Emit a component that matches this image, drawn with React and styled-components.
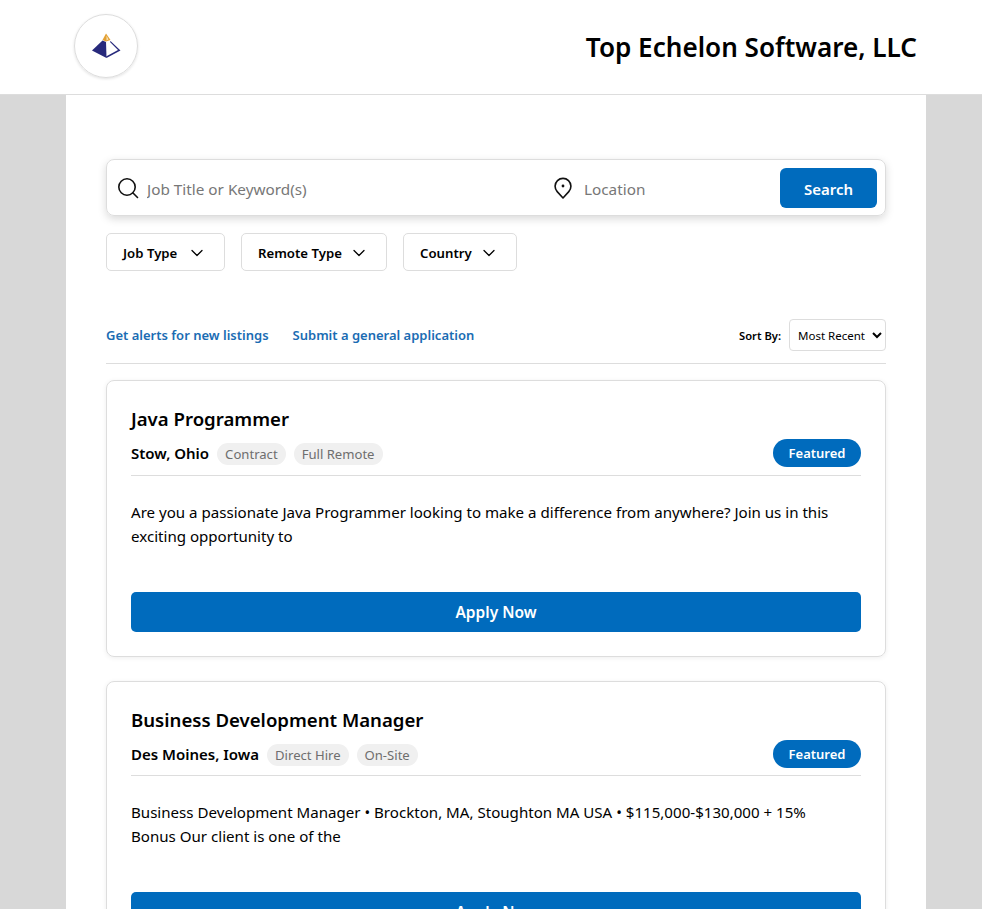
import React from "react"
import styled, { createGlobalStyle } from "styled-components"
import { ChevronDown } from "lucide-react"

const Global = createGlobalStyle`
  html, body {
    margin: 0;
    padding: 0;
    height: 909px;
    overflow: hidden;
    background: #d8d8d8;
    font-family: "Noto Sans", "Open Sans", sans-serif;
    color: #000;
  }
`

const jobs = [
  {
    title: "Java Programmer",
    place: "Stow, Ohio",
    tags: ["Contract", "Full Remote"],
    text: "Are you a passionate Java Programmer looking to make a difference from anywhere? Join us in this exciting opportunity to",
  },
  {
    title: "Business Development Manager",
    place: "Des Moines, Iowa",
    tags: ["Direct Hire", "On-Site"],
    text: "Business Development Manager • Brockton, MA, Stoughton MA USA • $115,000-$130,000 + 15% Bonus Our client is one of the",
  },
]

const filters = [
  { label: "Job Type", width: 119 },
  { label: "Remote Type", width: 146 },
  { label: "Country", width: 114 },
]

function Logo() {
  return (
    <svg width="30" height="26" viewBox="0 0 30 26">
      <path d="M15 0.5 L19.5 7 L15 8.5 L11.5 7 Z" fill="#e3a033" />
      <path d="M15.5 2.5 L17.5 6.5 L15.5 7.5 Z" fill="#f6e2b8" />
      <path d="M11.5 7.5 L15 9 L15.5 25 L1 17.5 Z" fill="#27297c" />
      <path d="M19.5 8 L29.5 17.5 L15.5 25 L15 23.4 L27 17 L19 9 Z" fill="#27297c" />
    </svg>
  )
}

function SearchIcon() {
  return (
    <svg width="22" height="22" viewBox="0 0 22 22" fill="none" stroke="#111" strokeWidth="1.6" strokeLinecap="round">
      <circle cx="10" cy="10" r="8.2" />
      <path d="M16 16 L20.5 20.5" />
    </svg>
  )
}

function PinIcon() {
  return (
    <svg width="20" height="22" viewBox="0 0 20 22" fill="none" stroke="#111" strokeWidth="1.6" strokeLinejoin="round">
      <path d="M10 21 L4.2 14.6 A7.9 7.9 0 1 1 15.8 14.6 Z" />
      <circle cx="10" cy="9" r="1.4" fill="#111" stroke="none" />
    </svg>
  )
}

export default function App() {
  return (
    <>
      <Global />
      <S.Header>
        <S.LogoCircle>
          <Logo />
        </S.LogoCircle>
        <S.Company>Top Echelon Software, LLC</S.Company>
      </S.Header>
      <S.Main>
        <S.SearchBar>
          <S.KeywordField>
            <SearchIcon />
            <S.Input placeholder="Job Title or Keyword(s)" />
          </S.KeywordField>
          <S.LocationField>
            <PinIcon />
            <S.Input placeholder="Location" />
          </S.LocationField>
          <S.SearchButton>Search</S.SearchButton>
        </S.SearchBar>
        <S.Filters>
          {filters.map((f) => (
            <S.Filter key={f.label} $width={f.width}>
              {f.label}
              <ChevronDown size={20} strokeWidth={1.5} />
            </S.Filter>
          ))}
        </S.Filters>
        <S.Toolbar>
          <S.Links>
            <S.Link>Get alerts for new listings</S.Link>
            <S.Link>Submit a general application</S.Link>
          </S.Links>
          <S.Sort>
            <S.SortLabel>Sort By:</S.SortLabel>
            <S.Select defaultValue="recent">
              <option value="recent">Most Recent</option>
            </S.Select>
          </S.Sort>
        </S.Toolbar>
        <S.List>
          {jobs.map((job) => (
            <S.Card key={job.title}>
              <S.Title>{job.title}</S.Title>
              <S.Meta>
                <S.Place>{job.place}</S.Place>
                {job.tags.map((t) => (
                  <S.Tag key={t}>{t}</S.Tag>
                ))}
                <S.Featured>Featured</S.Featured>
              </S.Meta>
              <S.Text>{job.text}</S.Text>
              <S.Apply>Apply Now</S.Apply>
            </S.Card>
          ))}
        </S.List>
      </S.Main>
    </>
  )
}

const S = {
  Header: styled.header`
    height: 94px;
    background: #fff;
    border-bottom: 1px solid #ddd;
    display: flex;
    align-items: center;
    justify-content: space-between;
    padding: 0 65px 0 74px;
  `,
  LogoCircle: styled.div`
    width: 62px;
    height: 62px;
    border: 1px solid #ddd;
    border-radius: 50%;
    box-shadow: 0 1px 3px rgba(0, 0, 0, 0.12);
    display: flex;
    align-items: center;
    justify-content: center;
    margin-top: -3px;
  `,
  Company: styled.h1`
    margin: 0;
    font-size: 26.1px;
    font-weight: 600;
  `,
  Main: styled.main`
    width: 780px;
    margin-left: 66px;
    padding: 64px 40px 0;
    background: #fff;
    height: 750px;
    overflow: hidden;
  `,
  SearchBar: styled.div`
    height: 55px;
    border: 1px solid #ddd;
    border-radius: 8px;
    box-shadow: 0 3px 8px rgba(0, 0, 0, 0.15);
    display: flex;
    align-items: center;
    padding: 0 8px 0 10px;
  `,
  KeywordField: styled.div`
    flex: none;
    width: 436px;
    display: flex;
    align-items: center;
    gap: 8px;
  `,
  LocationField: styled.div`
    flex: 1;
    min-width: 0;
    display: flex;
    align-items: center;
    gap: 11px;
  `,
  Input: styled.input`
    flex: 1;
    min-width: 0;
    border: 0;
    outline: 0;
    padding: 2px 0 0;
    font: inherit;
    font-size: 15.3px;
    &::placeholder {
      color: #777;
    }
  `,
  SearchButton: styled.button`
    flex: none;
    width: 97px;
    height: 40px;
    padding: 2px 0 0;
    border: 0;
    border-radius: 6px;
    background: #006bbd;
    color: #fff;
    font: inherit;
    font-size: 15px;
    font-weight: 600;
  `,
  Filters: styled.div`
    display: flex;
    gap: 16px;
    margin-top: 17px;
  `,
  Filter: styled.button`
    width: ${(p) => p.$width}px;
    height: 38px;
    padding: 1px 17px 0 16px;
    border: 1px solid #ddd;
    border-radius: 5px;
    background: #fff;
    color: #000;
    font: inherit;
    font-size: 13.2px;
    font-weight: 600;
    display: flex;
    align-items: center;
    justify-content: space-between;
  `,
  Toolbar: styled.div`
    display: flex;
    align-items: center;
    justify-content: space-between;
    margin-top: 48px;
    padding-bottom: 12px;
    border-bottom: 1px solid #ddd;
  `,
  Links: styled.div`
    display: flex;
    gap: 24px;
  `,
  Link: styled.a`
    color: #1a6cb3;
    font-size: 13px;
    font-weight: 600;
  `,
  Sort: styled.div`
    display: flex;
    align-items: center;
    gap: 8px;
  `,
  SortLabel: styled.span`
    font-size: 11.2px;
    font-weight: 600;
  `,
  Select: styled.select`
    width: 97px;
    height: 32px;
    border: 1px solid #ddd;
    border-radius: 4px;
    background: #fff;
    font: inherit;
    font-size: 11.5px;
    padding: 0 2px 0 4px;
  `,
  List: styled.div`
    display: flex;
    flex-direction: column;
    gap: 24px;
    margin-top: 16px;
  `,
  Card: styled.article`
    border: 1px solid #ddd;
    border-radius: 8px;
    padding: 23px 24px 24px;
    box-shadow: 0 1px 5px rgba(0, 0, 0, 0.07);
  `,
  Title: styled.h2`
    margin: 0;
    font-size: 18.6px;
    line-height: 30px;
    font-weight: 600;
  `,
  Meta: styled.div`
    display: flex;
    align-items: center;
    gap: 8px;
    height: 38.25px;
    padding-bottom: 2.5px;
    border-bottom: 1px solid #ddd;
  `,
  Place: styled.span`
    font-size: 15px;
    font-weight: 600;
  `,
  Tag: styled.span`
    height: 22px;
    line-height: 22px;
    margin-top: 2px;
    padding: 0 8px;
    border-radius: 11px;
    background: #f0f0f0;
    color: #6e6e6e;
    font-size: 13.1px;
  `,
  Featured: styled.span`
    margin-left: auto;
    height: 28px;
    line-height: 28px;
    padding: 0 15.5px;
    border-radius: 14px;
    background: #006bbd;
    color: #fff;
    font-size: 13px;
    font-weight: 600;
  `,
  Text: styled.p`
    margin: 24px 0 0;
    max-width: 704px;
    height: 91.75px;
    font-size: 15.1px;
    line-height: 24px;
  `,
  Apply: styled.button`
    display: block;
    width: 100%;
    height: 40px;
    border: 0;
    border-radius: 5px;
    background: #006bbd;
    color: #fff;
    font: inherit;
    font-size: 15.5px;
    font-weight: 600;
  `,
}
